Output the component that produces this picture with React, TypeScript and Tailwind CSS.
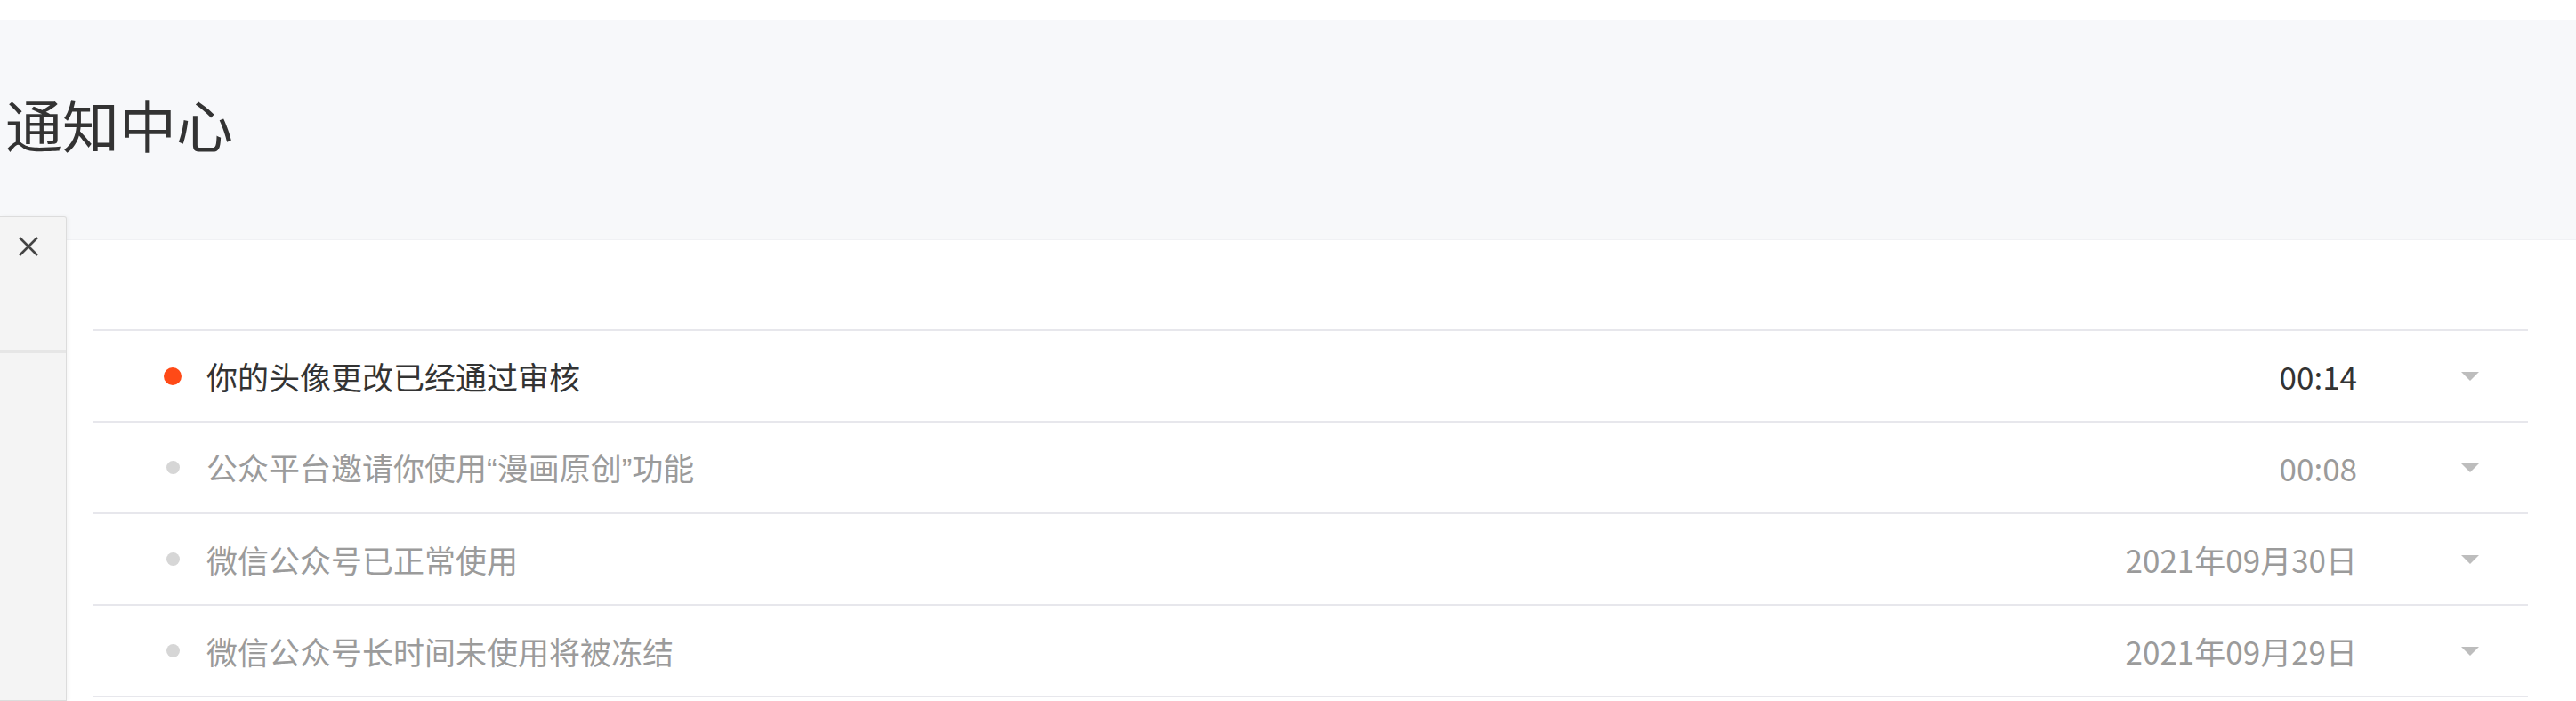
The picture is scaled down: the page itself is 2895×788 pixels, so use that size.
const font = { fontFamily: '"Noto Sans CJK SC", "Noto Sans", sans-serif' };

type Notice = {
  title: React.ReactNode;
  time: string;
  unread?: boolean;
};

const Q = ({ children }: { children: React.ReactNode }) => (
  <span className="font-['Liberation_Sans',sans-serif]">{children}</span>
);

const notices: Notice[] = [
  { title: '你的头像更改已经通过审核', time: '00:14', unread: true },
  {
    title: (
      <>
        公众平台邀请你使用<Q>“</Q>漫画原创<Q>”</Q>功能
      </>
    ),
    time: '00:08',
  },
  { title: '微信公众号已正常使用', time: '2021年09月30日' },
  { title: '微信公众号长时间未使用将被冻结', time: '2021年09月29日' },
];

function Caret() {
  return (
    <svg width="20" height="10" viewBox="0 0 20 10" className="shrink-0">
      <path d="M0 0 L20 0 L10 10 Z" fill="#bdbdbd" />
    </svg>
  );
}

function NoticeRow({ notice }: { notice: Notice }) {
  const color = notice.unread ? 'text-[#333333]' : 'text-[#9b9b9b]';
  return (
    <div className="flex h-[103px] items-center border-b-2 border-[#e7e7ec] pl-[79px] pr-[55px]">
      <div className="flex w-[20px] justify-center">
        {notice.unread ? (
          <span className="block h-[20px] w-[20px] rounded-full bg-[#ff4a17]" />
        ) : (
          <span className="block h-[15px] w-[15px] rounded-full bg-[#d6d6d6]" />
        )}
      </div>
      <div className={`ml-[28px] flex-1 text-[35px] leading-none ${color}`}>{notice.title}</div>
      <div className={`text-[35px] leading-none ${color}`}>{notice.time}</div>
      <div className="ml-[117px]">
        <Caret />
      </div>
    </div>
  );
}

export default function App() {
  return (
    <div className="relative h-[788px] w-full overflow-hidden bg-white" style={font}>
      <div className="h-[22px]" />
      <header className="flex h-[248px] items-center border-b border-[#f0f1f4] bg-[#f7f8fa] pb-[16px] pl-[6px]">
        <h1 className="text-[64px] leading-none font-normal text-[#333333]">通知中心</h1>
      </header>

      <main className="pt-[100px] pl-[105px] pr-[54px]">
        <div className="border-t-2 border-[#e7e7ec]">
          {notices.map((n) => (
            <NoticeRow key={n.time} notice={n} />
          ))}
        </div>
      </main>

      {/* collapsed side drawer */}
      <aside className="absolute top-[243px] bottom-0 left-0 w-[75px] rounded-tr-[3px] border border-l-0 border-[#dcdcdc] bg-[#f4f4f4] shadow-[2px_0_4px_rgba(0,0,0,0.04)]">
        <div className="flex h-[153px] justify-center border-b-[3px] border-[#e6e6e6] pt-[22px]">
          <svg width="22" height="22" viewBox="0 0 22 22" className="ml-[-10px]">
            <path d="M1 1 L21 21 M21 1 L1 21" stroke="#444" strokeWidth="2.6" />
          </svg>
        </div>
      </aside>
    </div>
  );
}
